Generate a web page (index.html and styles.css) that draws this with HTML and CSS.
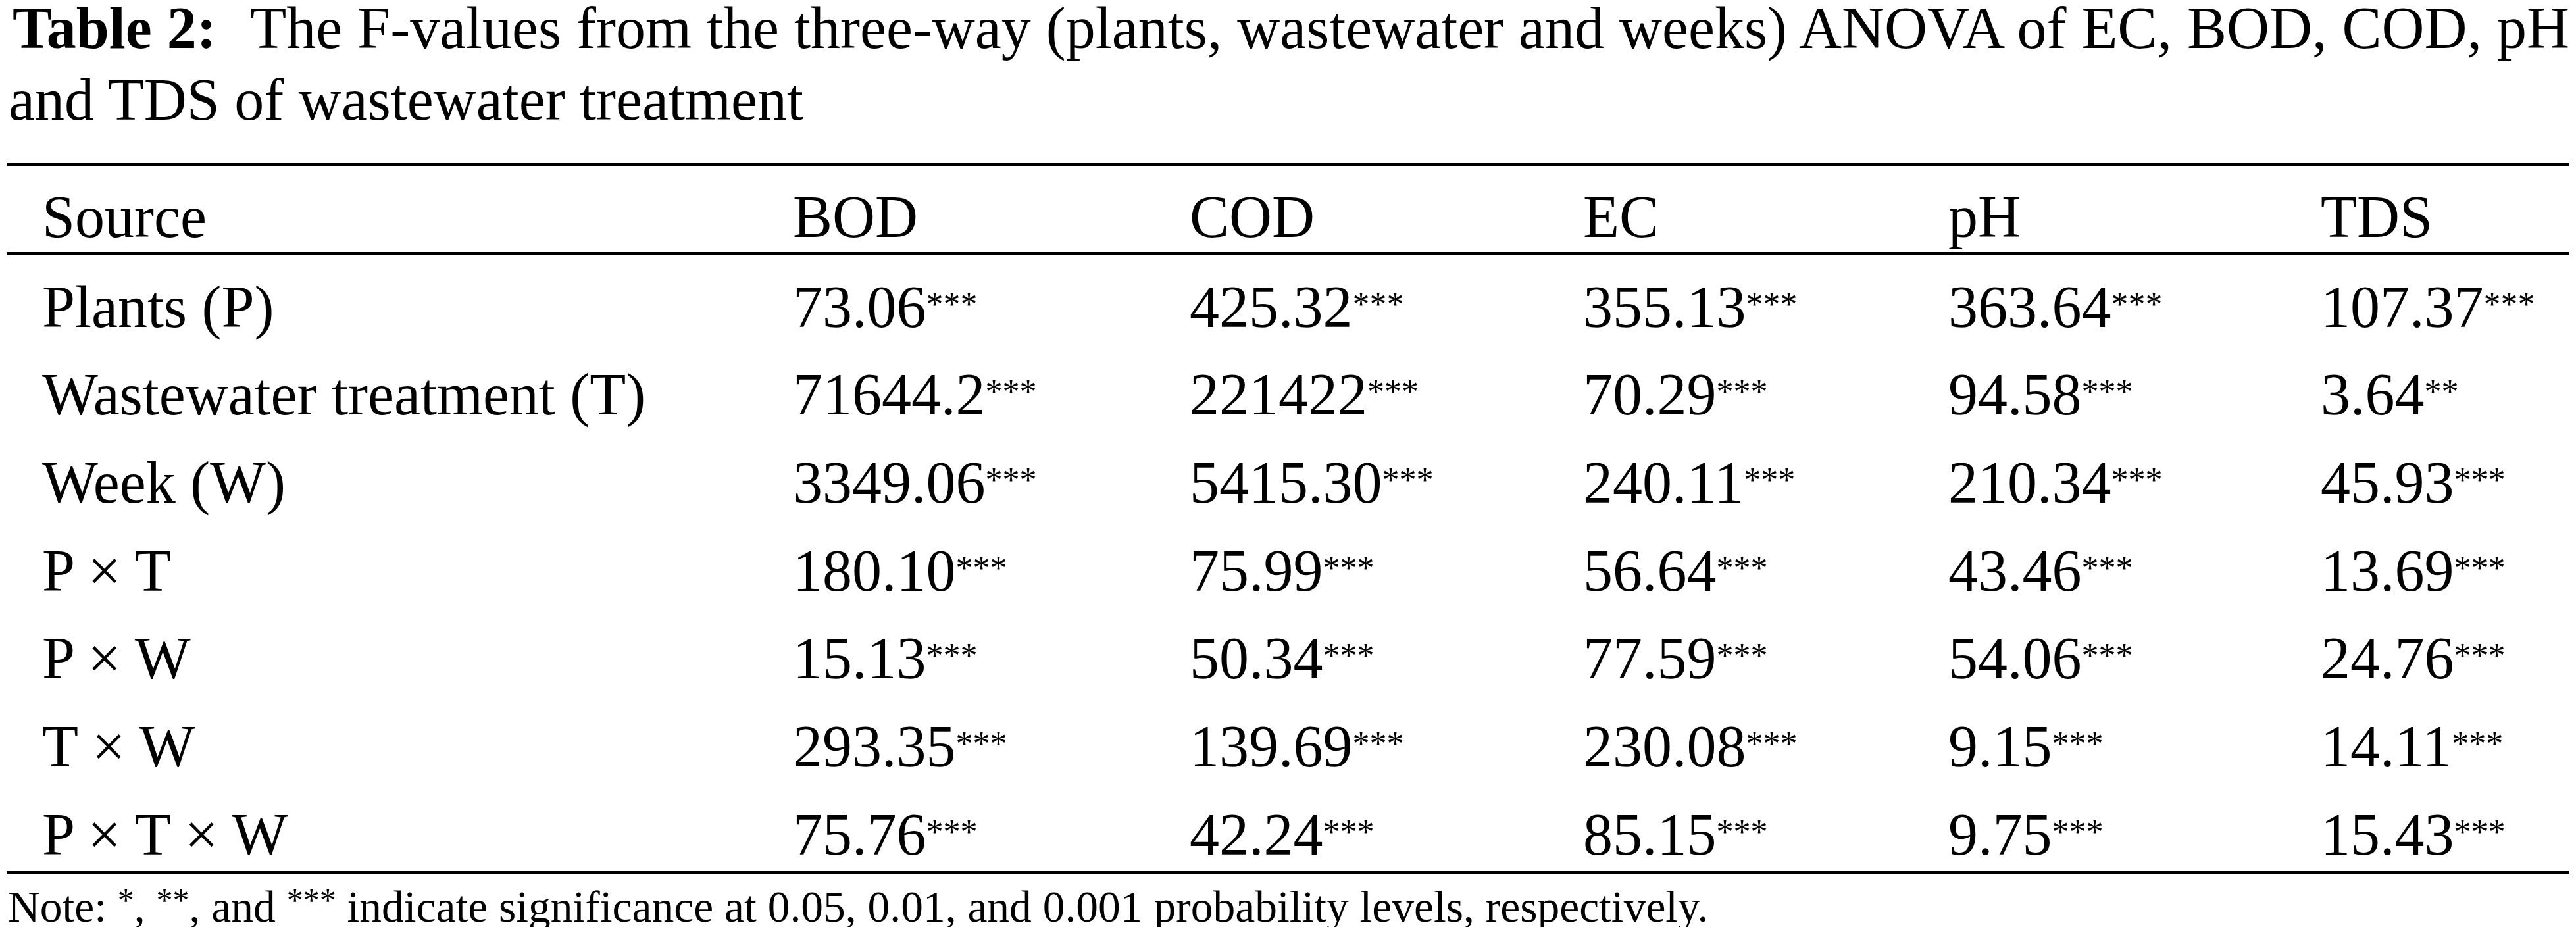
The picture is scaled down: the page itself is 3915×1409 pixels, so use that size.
FILE: index.html
```html
<!DOCTYPE html>
<html lang="en">
<head>
<meta charset="utf-8">
<title>Table 2</title>
<link rel="stylesheet" href="styles.css">
</head>
<body>
<div class="page">
  <p class="caption"><span class="label">Table 2:</span> The F-values from the three-way (plants, wastewater and weeks) ANOVA of EC, BOD, COD, pH and TDS of wastewater treatment</p>
  <table class="anova">
    <colgroup>
      <col class="c-src">
      <col class="c-bod">
      <col class="c-cod">
      <col class="c-ec">
      <col class="c-ph">
      <col class="c-tds">
    </colgroup>
    <thead>
      <tr><th>Source</th><th>BOD</th><th>COD</th><th>EC</th><th>pH</th><th>TDS</th></tr>
    </thead>
    <tbody>
      <tr><td>Plants (P)</td><td>73.06<sup class="sig">***</sup></td><td>425.32<sup class="sig">***</sup></td><td>355.13<sup class="sig">***</sup></td><td>363.64<sup class="sig">***</sup></td><td>107.37<sup class="sig">***</sup></td></tr>
      <tr><td>Wastewater treatment (T)</td><td>71644.2<sup class="sig">***</sup></td><td>221422<sup class="sig">***</sup></td><td>70.29<sup class="sig">***</sup></td><td>94.58<sup class="sig">***</sup></td><td>3.64<sup class="sig">**</sup></td></tr>
      <tr><td>Week (W)</td><td>3349.06<sup class="sig">***</sup></td><td>5415.30<sup class="sig">***</sup></td><td>240.11<sup class="sig">***</sup></td><td>210.34<sup class="sig">***</sup></td><td>45.93<sup class="sig">***</sup></td></tr>
      <tr><td>P × T</td><td>180.10<sup class="sig">***</sup></td><td>75.99<sup class="sig">***</sup></td><td>56.64<sup class="sig">***</sup></td><td>43.46<sup class="sig">***</sup></td><td>13.69<sup class="sig">***</sup></td></tr>
      <tr><td>P × W</td><td>15.13<sup class="sig">***</sup></td><td>50.34<sup class="sig">***</sup></td><td>77.59<sup class="sig">***</sup></td><td>54.06<sup class="sig">***</sup></td><td>24.76<sup class="sig">***</sup></td></tr>
      <tr><td>T × W</td><td>293.35<sup class="sig">***</sup></td><td>139.69<sup class="sig">***</sup></td><td>230.08<sup class="sig">***</sup></td><td>9.15<sup class="sig">***</sup></td><td>14.11<sup class="sig">***</sup></td></tr>
      <tr><td>P × T × W</td><td>75.76<sup class="sig">***</sup></td><td>42.24<sup class="sig">***</sup></td><td>85.15<sup class="sig">***</sup></td><td>9.75<sup class="sig">***</sup></td><td>15.43<sup class="sig">***</sup></td></tr>
    </tbody>
  </table>
  <p class="note">Note: <sup class="nsig">*</sup>, <sup class="nsig">**</sup>, and <sup class="nsig">***</sup> indicate significance at 0.05, 0.01, and 0.001 probability levels, respectively.</p>
</div>
</body>
</html>
```

FILE: styles.css
```css
html, body {
  margin: 0;
  padding: 0;
  background: #ffffff;
}

body {
  font-family: "Liberation Serif", "Times New Roman", serif;
  color: #000000;
  overflow: hidden;
}

.page {
  width: 3915px;
  height: 1409px;
  box-sizing: border-box;
  padding: 0 10px;
  overflow: hidden;
}

.caption {
  margin: -12px 0 41px 3px;
  font-size: 90px;
  line-height: 109px;
  text-align: justify;
  text-indent: 6px;
}

.label {
  font-weight: bold;
  margin-right: 30px;
}

.anova {
  width: 3895px;
  table-layout: fixed;
  border-collapse: separate;
  border-spacing: 0;
  font-size: 90px;
  line-height: 90px;
}

.c-src { width: 1195px; }
.c-bod { width: 603px; }
.c-cod { width: 598px; }
.c-ec  { width: 555px; }
.c-ph  { width: 566px; }
.c-tds { width: 378px; }

.anova th,
.anova td {
  padding: 0;
  text-align: left;
  vertical-align: top;
  white-space: nowrap;
}

.anova th {
  font-weight: normal;
  height: 90px;
  padding-top: 32.6px;
  padding-bottom: 8.4px;
  border-top: 5px solid #000;
  border-bottom: 5px solid #000;
}

.anova td {
  height: 90px;
  padding-top: 33.6px;
  padding-bottom: 10.07px;
}

.anova th:first-child,
.anova td:first-child {
  padding-left: 54px;
}

.anova tbody tr:last-child td {
  border-bottom: 5px solid #000;
}

.sig {
  font-size: 52px;
  line-height: 0;
  vertical-align: 17px;
}

.note {
  margin: 10px 0 0 2px;
  font-size: 67.5px;
  line-height: 80px;
  white-space: nowrap;
}

.nsig {
  font-size: 50px;
  line-height: 0;
  vertical-align: 16px;
}
```
